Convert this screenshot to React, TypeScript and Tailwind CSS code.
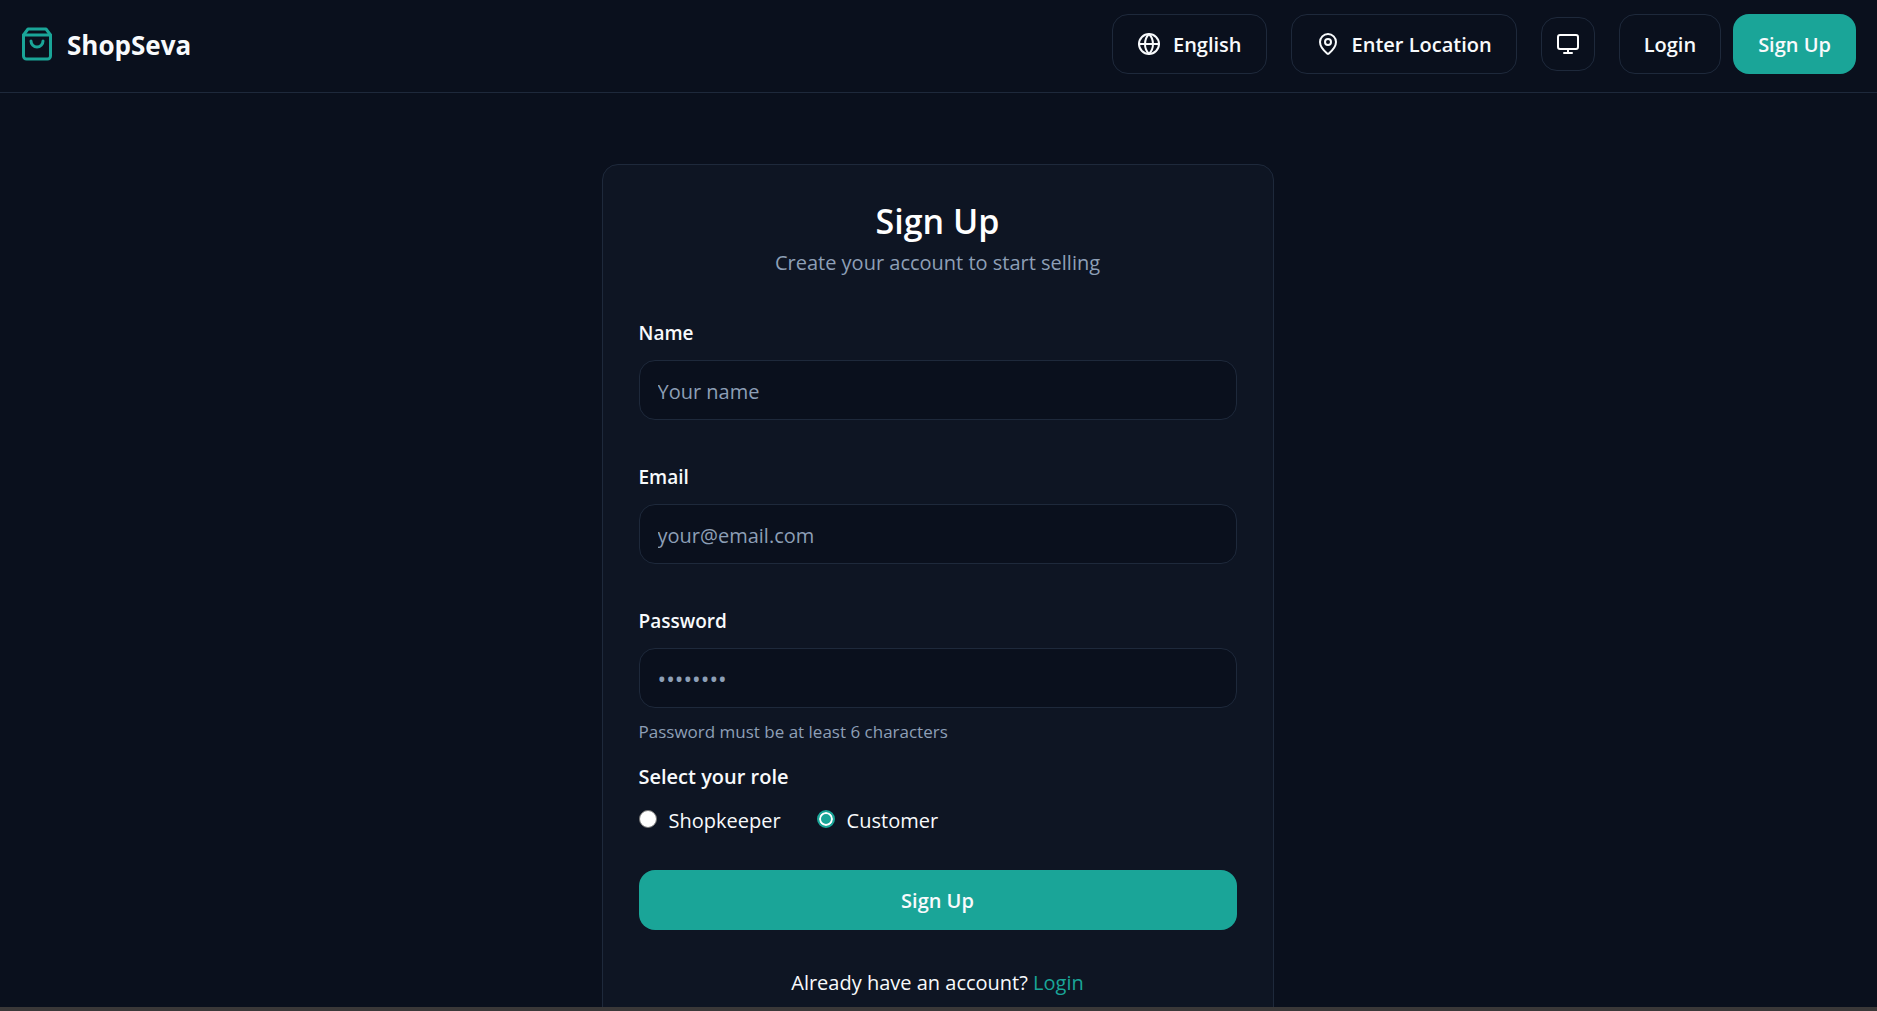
import { useState } from "react";
import { Globe, MapPin, Monitor } from "lucide-react";

const outline =
  "flex h-[60px] items-center justify-center gap-3 rounded-2xl border border-[#1e293b] px-6 font-semibold text-slate-50";

function Logo() {
  return (
    <a href="#home" className="flex items-center gap-3 text-[26px] font-bold text-slate-50">
      <svg
        className="size-9 text-[#1aa598]"
        viewBox="0 0 24 24"
        fill="none"
        stroke="currentColor"
        strokeWidth="2"
        strokeLinecap="round"
        strokeLinejoin="round"
        aria-hidden="true"
      >
        <path d="M6 2 3 6v14a2 2 0 0 0 2 2h14a2 2 0 0 0 2-2V6l-3-4Z" />
        <path d="M3 6h18" />
        <path d="M16 10a4 4 0 0 1-8 0" />
      </svg>
      <span className="pt-0.5">ShopSeva</span>
    </a>
  );
}

function Header() {
  return (
    <header className="flex shrink-0 items-center justify-between border-b border-[#1e293b] pt-3.5 pr-[21px] pb-[18px] pl-[19px]">
      <Logo />
      <nav className="flex items-center gap-6">
        <button type="button" className={outline}>
          <Globe className="size-6" />
          <span className="pt-0.5">English</span>
        </button>
        <button type="button" className={outline}>
          <MapPin className="size-6" />
          <span className="pt-0.5">Enter Location</span>
        </button>
        <button
          type="button"
          aria-label="Theme"
          className="flex size-[54px] items-center justify-center rounded-2xl border border-[#1e293b] text-white"
        >
          <Monitor className="size-6" />
        </button>
        <div className="flex items-center gap-3">
          <button type="button" className={outline}>
            <span className="pt-0.5">Login</span>
          </button>
          <button
            type="button"
            className="flex h-[60px] items-center justify-center rounded-2xl bg-[#1aa598] px-[25px] font-semibold text-slate-50"
          >
            <span className="pt-0.5">Sign Up</span>
          </button>
        </div>
      </nav>
    </header>
  );
}

type FieldProps = { id: string; label: string; type: string; placeholder: string };

function Field({ id, label, type, placeholder }: FieldProps) {
  return (
    <div className="flex flex-col gap-3">
      <label htmlFor={id} className="text-[19px] font-semibold text-slate-50">
        {label}
      </label>
      <input
        id={id}
        type={type}
        placeholder={placeholder}
        className={
          "h-[60px] w-full rounded-2xl border border-[#1e293b] bg-[#0a101d] px-[18px] pt-0.5 text-slate-50 outline-none placeholder:text-[#8d9fb6]" +
          (type === "password" ? " text-[23px]" : "")
        }
      />
    </div>
  );
}

function SignUpCard() {
  const [role, setRole] = useState("customer");
  return (
    <section className="w-full max-w-[672px] rounded-2xl border border-[#1e293b] bg-[#0e1523] p-9">
      <h1 className="text-center text-[34px] leading-10 font-semibold text-white">Sign Up</h1>
      <p className="mt-[7px] text-center text-[#8d9fb6]">Create your account to start selling</p>
      <form className="mt-10" onSubmit={(e) => e.preventDefault()}>
        <div className="flex flex-col gap-[42px]">
          <Field id="name" label="Name" type="text" placeholder="Your name" />
          <Field id="email" label="Email" type="email" placeholder="your@email.com" />
          <Field id="password" label="Password" type="password" placeholder="••••••••" />
        </div>
        <p className="mt-3 text-[17px] leading-6 text-[#8d9fb6]">Password must be at least 6 characters</p>
        <fieldset className="mt-[18px]">
          <legend className="font-semibold text-slate-50">Select your role</legend>
          <div className="mt-3.5 flex gap-9 text-slate-50">
            {[
              { value: "shopkeeper", label: "Shopkeeper" },
              { value: "customer", label: "Customer" },
            ].map((r) => (
              <label key={r.value} className="flex items-center gap-3">
                <input
                  type="radio"
                  name="role"
                  value={r.value}
                  checked={role === r.value}
                  onChange={() => setRole(r.value)}
                  className="mb-1 size-[18px] appearance-none rounded-full border border-[#767676] bg-white checked:border-2 checked:border-[#1aa598] checked:bg-[#1aa598] checked:shadow-[inset_0_0_0_2px_white]"
                />
                {r.label}
              </label>
            ))}
          </div>
        </fieldset>
        <button
          type="submit"
          className="mt-[34px] h-[60px] w-full rounded-2xl bg-[#1aa598] pt-0.5 font-semibold text-slate-50"
        >
          Sign Up
        </button>
      </form>
      <p className="mt-[38px] text-center text-slate-50">
        Already have an account?{" "}
        <a href="#login" className="text-[#1aa598]">
          Login
        </a>
      </p>
    </section>
  );
}

export default function App() {
  return (
    <div className="flex h-screen flex-col bg-[#0a101d] font-['Open_Sans',sans-serif] text-[20px] leading-[30px]">
      <Header />
      <main className="flex min-h-0 flex-1 items-start justify-center overflow-y-auto py-[71px] pr-[22px] pl-5 [scrollbar-width:none]">
        <SignUpCard />
      </main>
      <div className="h-1 shrink-0 bg-[#3a3838]" />
    </div>
  );
}
